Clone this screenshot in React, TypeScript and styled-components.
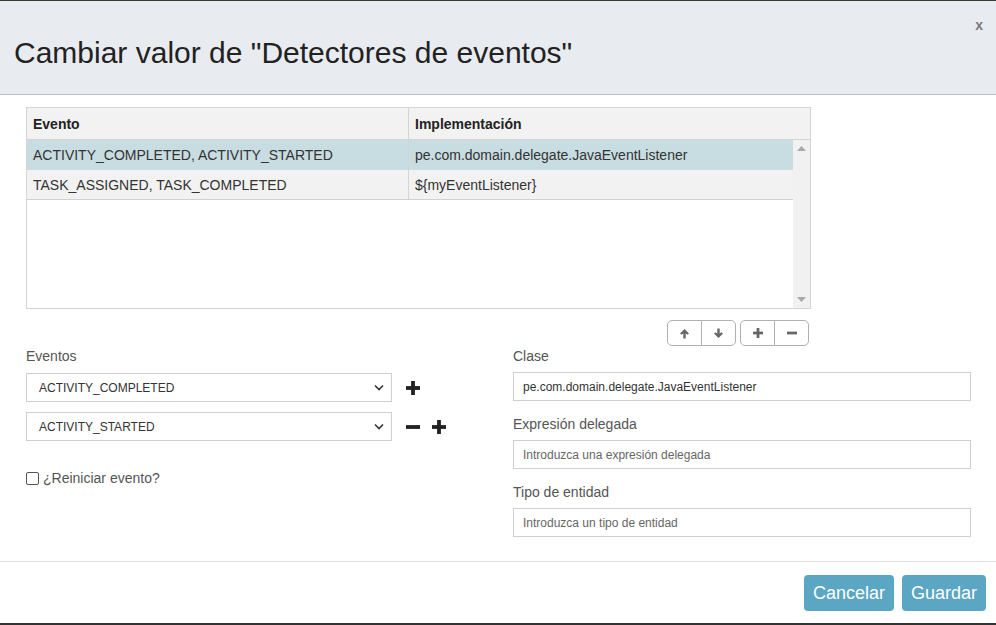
import React from "react";
import styled, { createGlobalStyle } from "styled-components";

const Global = createGlobalStyle`
  html, body { margin: 0; padding: 0; background: #fff; }
  body { font-family: "Liberation Sans", Arial, sans-serif; color: #333; }
  * { box-sizing: border-box; }
`;

const Frame = styled.div`
  width: 996px;
  height: 625px;
  border-top: 1px solid #3a3a3a;
  border-bottom: 2px solid #333;
  display: flex;
  flex-direction: column;
  background: #fff;
`;

const Header = styled.div`
  position: relative;
  height: 94px;
  flex: none;
  background: #e8ecf0;
  border-bottom: 1px solid #b7bfc7;
  display: flex;
  align-items: center;
  padding: 10px 0 0 14px;
`;

const Title = styled.h1`
  margin: 0;
  font-size: 30px;
  font-weight: normal;
  color: #222;
  letter-spacing: 0;
`;

const Close = styled.span`
  position: absolute;
  top: 16px;
  right: 13px;
  font-size: 14px;
  font-weight: bold;
  color: #777;
`;

const Body = styled.div`
  flex: 1;
  padding: 12px 25px 0 26px;
  display: flex;
  flex-direction: column;
`;

const Table = styled.div`
  width: 785px;
  height: 202px;
  border: 1px solid #d4d4d4;
  display: flex;
  flex-direction: column;
  background: #fff;
`;

const HeadRow = styled.div`
  display: grid;
  grid-template-columns: 382px 1fr;
  height: 32px;
  background: #f2f2f2;
  border-bottom: 1px solid #d4d4d4;
  flex: none;
`;

const HeadCell = styled.div<{ $first?: boolean }>`
  font-size: 14px;
  font-weight: bold;
  color: #222;
  padding: 0 6px;
  display: flex;
  align-items: center;
  border-right: ${(p) => (p.$first ? "1px solid #d4d4d4" : "none")};
`;

const TableBody = styled.div`
  flex: 1;
  display: flex;
`;

const Rows = styled.div`
  flex: 1;
  display: flex;
  flex-direction: column;
`;

const Row = styled.div<{ $selected?: boolean; $last?: boolean }>`
  display: grid;
  grid-template-columns: 382px 1fr;
  height: 30px;
  background: ${(p) => (p.$selected ? "#c8dde1" : "#f2f2f2")};
  border-bottom: ${(p) => (p.$last ? "1px solid #d0d0d0" : "none")};
`;

const Cell = styled.div<{ $first?: boolean }>`
  font-size: 14px;
  color: #333;
  padding: 0 6px;
  display: flex;
  align-items: center;
  white-space: nowrap;
  border-right: ${(p) => (p.$first ? "1px solid #d4d4d4" : "none")};
`;

const Scrollbar = styled.div`
  width: 17px;
  background: #f1f1f1;
  display: flex;
  flex-direction: column;
  justify-content: space-between;
  align-items: center;
  padding: 6px 0 6px;
`;

const Toolbar = styled.div`
  width: 785px;
  display: flex;
  justify-content: flex-end;
  gap: 4px;
  margin-top: 11px;
  padding-right: 2px;
`;

const BtnGroup = styled.div`
  display: flex;
`;

const ToolBtn = styled.button<{ $pos: "left" | "right" }>`
  width: 35px;
  height: 26px;
  border: 1px solid #b0b0b0;
  background: #fff;
  display: flex;
  align-items: center;
  justify-content: center;
  padding: 0;
  border-radius: ${(p) => (p.$pos === "left" ? "5px 0 0 5px" : "0 5px 5px 0")};
  margin-left: ${(p) => (p.$pos === "right" ? "-1px" : "0")};
  color: #666;
`;

const Columns = styled.div`
  display: flex;
  margin-top: 0;
`;

const LeftCol = styled.div`
  width: 489px;
  display: flex;
  flex-direction: column;
`;

const RightCol = styled.div`
  flex: 1;
  display: flex;
  flex-direction: column;
`;

const Label = styled.div<{ $top?: number }>`
  font-size: 14px;
  color: #555;
  margin-top: ${(p) => p.$top ?? 0}px;
  height: 20px;
  line-height: 20px;
`;

const SelectLine = styled.div<{ $top: number }>`
  display: flex;
  align-items: center;
  margin-top: ${(p) => p.$top}px;
`;

const Select = styled.div`
  width: 366px;
  height: 29px;
  border: 1px solid #cfcfcf;
  display: flex;
  align-items: center;
  justify-content: space-between;
  padding: 0 7px 0 12px;
  font-size: 12px;
  color: #333;
  background: #fff;
`;

const IconBtns = styled.div`
  display: flex;
  gap: 12px;
  margin-left: 14px;
  align-items: center;
`;

const CheckLine = styled.label`
  display: flex;
  align-items: center;
  gap: 4px;
  margin-top: 29px;
  font-size: 14px;
  color: #555;
`;

const Box = styled.span`
  width: 13px;
  height: 13px;
  border: 1px solid #555;
  border-radius: 2px;
  background: #fff;
  display: inline-block;
`;

const Input = styled.div<{ $placeholder?: boolean }>`
  width: 458px;
  height: 29px;
  border: 1px solid #cfcfcf;
  display: flex;
  align-items: center;
  padding: 0 9px;
  font-size: 12px;
  color: ${(p) => (p.$placeholder ? "#666" : "#333")};
  margin-top: 6px;
`;

const Footer = styled.div`
  height: 62px;
  flex: none;
  border-top: 1px solid #e2e2e2;
  display: flex;
  justify-content: flex-end;
  align-items: flex-start;
  gap: 8px;
  padding: 13px 10px 0 0;
`;

const ActionBtn = styled.button<{ $w: number }>`
  width: ${(p) => p.$w}px;
  height: 36px;
  background: #5aa6c3;
  color: #fff;
  border: none;
  border-radius: 4px;
  font-family: "Liberation Sans", Arial, sans-serif;
  font-size: 18px;
  padding: 0;
`;

const Tri = ({ up }: { up?: boolean }) => (
  <svg width="9" height="5" viewBox="0 0 9 5">
    <polygon points={up ? "4.5,0 9,5 0,5" : "0,0 9,0 4.5,5"} fill="#a8a8a8" />
  </svg>
);

const Arrow = ({ up }: { up?: boolean }) => (
  <svg width="11" height="11" viewBox="0 0 11 11" style={{ transform: up ? "none" : "rotate(180deg)" }}>
    <path d="M5.5 1 L10 5.5 L8.3 6.8 L6.7 5.2 L6.7 10.5 L4.3 10.5 L4.3 5.2 L2.7 6.8 L1 5.5 Z" fill="#666" />
  </svg>
);

const Plus = ({ size = 11, color = "#666" }: { size?: number; color?: string }) => (
  <svg width={size} height={size} viewBox="0 0 11 11">
    <rect x="4" y="0" width="3" height="11" fill={color} />
    <rect x="0" y="4" width="11" height="3" fill={color} />
  </svg>
);

const Minus = ({ size = 11, color = "#666" }: { size?: number; color?: string }) => (
  <svg width={size} height={size} viewBox="0 0 11 11">
    <rect x="0" y="4" width="11" height="3" fill={color} />
  </svg>
);

const Chevron = () => (
  <svg width="10" height="7" viewBox="0 0 10 7">
    <path d="M1 1.5 L5 5.5 L9 1.5" stroke="#333" strokeWidth="1.6" fill="none" />
  </svg>
);

export default function App() {
  return (
    <>
      <Global />
      <Frame>
        <Header>
          <Title>Cambiar valor de "Detectores de eventos"</Title>
          <Close>x</Close>
        </Header>
        <Body>
          <Table>
            <HeadRow>
              <HeadCell $first>Evento</HeadCell>
              <HeadCell>Implementación</HeadCell>
            </HeadRow>
            <TableBody>
              <Rows>
                <Row $selected>
                  <Cell $first>ACTIVITY_COMPLETED, ACTIVITY_STARTED</Cell>
                  <Cell>pe.com.domain.delegate.JavaEventListener</Cell>
                </Row>
                <Row $last>
                  <Cell $first>TASK_ASSIGNED, TASK_COMPLETED</Cell>
                  <Cell>{"${myEventListener}"}</Cell>
                </Row>
              </Rows>
              <Scrollbar>
                <Tri up />
                <Tri />
              </Scrollbar>
            </TableBody>
          </Table>
          <Toolbar>
            <BtnGroup>
              <ToolBtn $pos="left"><Arrow up /></ToolBtn>
              <ToolBtn $pos="right"><Arrow /></ToolBtn>
            </BtnGroup>
            <BtnGroup>
              <ToolBtn $pos="left"><Plus size={10} /></ToolBtn>
              <ToolBtn $pos="right"><Minus size={10} /></ToolBtn>
            </BtnGroup>
          </Toolbar>
          <Columns>
            <LeftCol>
              <Label>Eventos</Label>
              <SelectLine $top={7}>
                <Select>
                  <span>ACTIVITY_COMPLETED</span>
                  <Chevron />
                </Select>
                <IconBtns>
                  <Plus size={14} color="#222" />
                </IconBtns>
              </SelectLine>
              <SelectLine $top={10}>
                <Select>
                  <span>ACTIVITY_STARTED</span>
                  <Chevron />
                </Select>
                <IconBtns>
                  <Minus size={14} color="#222" />
                  <Plus size={14} color="#222" />
                </IconBtns>
              </SelectLine>
              <CheckLine>
                <Box />
                ¿Reiniciar evento?
              </CheckLine>
            </LeftCol>
            <RightCol>
              <Label>Clase</Label>
              <Input>pe.com.domain.delegate.JavaEventListener</Input>
              <Label $top={13}>Expresión delegada</Label>
              <Input $placeholder>Introduzca una expresión delegada</Input>
              <Label $top={13}>Tipo de entidad</Label>
              <Input $placeholder>Introduzca un tipo de entidad</Input>
            </RightCol>
          </Columns>
        </Body>
        <Footer>
          <ActionBtn $w={90}>Cancelar</ActionBtn>
          <ActionBtn $w={84}>Guardar</ActionBtn>
        </Footer>
      </Frame>
    </>
  );
}
